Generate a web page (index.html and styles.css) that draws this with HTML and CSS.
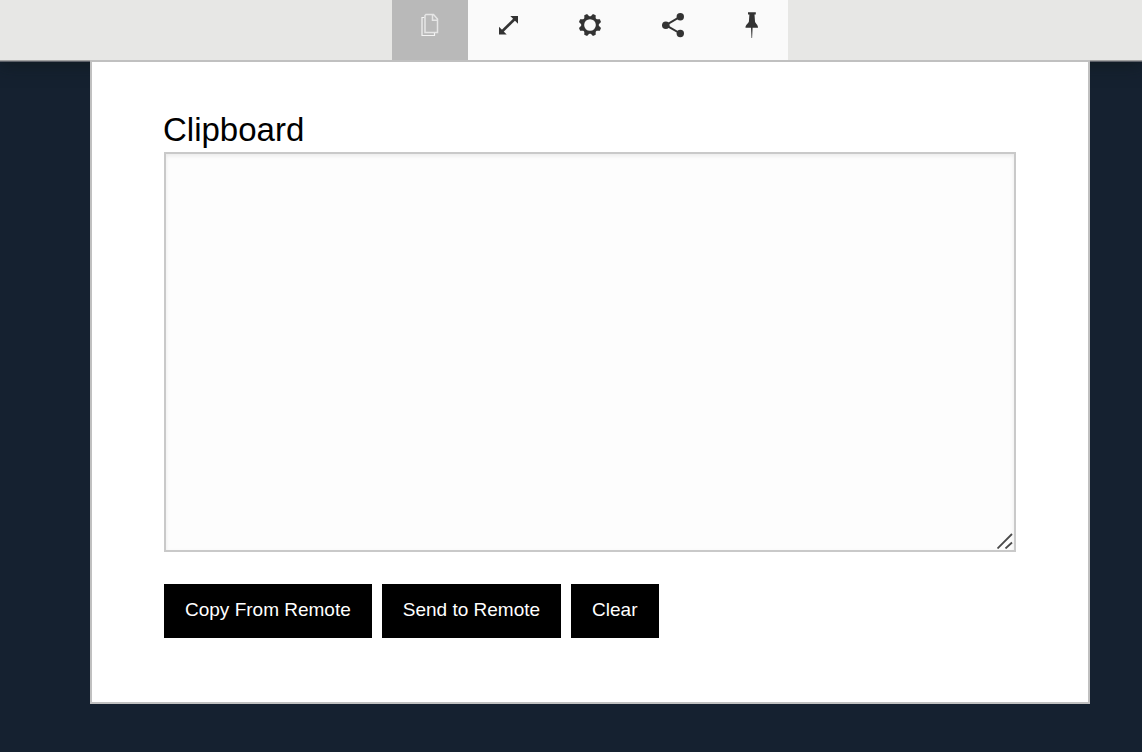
FILE: index.html
```html
<!DOCTYPE html>
<html lang="en">
<head>
<meta charset="utf-8">
<meta name="viewport" content="width=device-width, initial-scale=1">
<title>Clipboard</title>
<link rel="stylesheet" href="styles.css">
</head>
<body>
<header class="topbar">
  <nav class="tools" aria-label="Session tools">
    <button class="tool tool-active" type="button" aria-label="Clipboard">
      <svg class="icon" width="16" height="28" viewBox="422 11 16 28" fill="none" stroke="#f4f4f4" stroke-width="1.2">
        <path d="M424.500 17.500H422V35.500H434.500V33"/>
        <path stroke="#e6e6e6" stroke-width="1.500" d="M426 14.500H433.500L437.500 19V32.500H425V15.500Z M432.500 14.500V20.200H437.500"/>
      </svg>
    </button>
    <button class="tool" type="button" aria-label="Full screen">
      <svg class="icon" width="20" height="28" viewBox="498 11 20 28" fill="#333">
        <path d="M510.300 16H518V23.700Z M499 26.800V34.500H506.700Z"/>
        <path d="M502 31.500L515 18.800" stroke="#333" stroke-width="2.600"/>
      </svg>
    </button>
    <button class="tool" type="button" aria-label="Settings">
      <svg class="icon" width="24" height="28" viewBox="-12 -14 24 28" fill="#333">
        <circle r="7.300" fill="none" stroke="#333" stroke-width="2.900"/>
        <g id="teeth">
          <path id="tooth" d="M-3 -7.500L-1.500 -11.300H1.500L3 -7.500Z" transform="rotate(22.500)"/>
          <use href="#tooth" transform="rotate(45)"/>
          <use href="#tooth" transform="rotate(90)"/>
          <use href="#tooth" transform="rotate(135)"/>
        </g>
        <use href="#teeth" transform="rotate(180)"/>
      </svg>
    </button>
    <button class="tool" type="button" aria-label="Share">
      <svg class="icon" width="22" height="28" viewBox="662 11 22 28" fill="#333">
        <path d="M680.300 16.700L665.800 25.200L680.300 33.500" fill="none" stroke="#333" stroke-width="2"/>
        <circle cx="665.800" cy="25.200" r="3.800"/>
        <circle cx="680.300" cy="16.700" r="3.700"/>
        <circle cx="680.300" cy="33.500" r="3.700"/>
      </svg>
    </button>
    <button class="tool" type="button" aria-label="Pin toolbar">
      <svg class="icon" width="14" height="28" viewBox="744 11 14 28" fill="#333">
        <path d="M748 12.300H755.800V14.500H754.500L755 21.500C755.300 23.500 758 24.500 758 27.700H752.600L752.100 38H751.500L751 27.700H745.500C745.500 24.500 748.500 23.500 748.900 21.500L749.400 14.500H748Z"/>
      </svg>
    </button>
  </nav>
</header>
<main class="panel">
  <label class="title" for="clip">Clipboard</label>
  <div class="field">
    <textarea class="clip" id="clip"></textarea>
    <svg class="grip" width="16" height="16" viewBox="0 0 16 16" fill="none" stroke="#4a4a4a" stroke-width="1.800" aria-hidden="true">
      <path d="M.5 15.500L15 1M8.500 15.500L15 9.500"/>
    </svg>
  </div>
  <div class="actions">
    <button class="action" type="button">Copy From Remote</button>
    <button class="action" type="button">Send to Remote</button>
    <button class="action" type="button">Clear</button>
  </div>
</main>
</body>
</html>
```

FILE: styles.css
```css
* {
  box-sizing: border-box;
}

body {
  margin: 0;
  background: #152130;
  font-family: "Liberation Sans", Arial, sans-serif;
  color: #000;
}

.topbar {
  display: flex;
  justify-content: center;
  padding-left: 38px;
  background: #e7e7e5;
  box-shadow: 0 1px 0 #a0a0a0, 0 2px 0 #5c6068, 0 4px 16px rgba(14, 24, 28, .8);
}

.tools {
  display: flex;
  background: #fafafa;
}

.tool {
  display: flex;
  padding: 11px 30px 21px;
  border: 0;
  background: none;
}

.tool-active {
  background: #b9b9b9;
}

.icon {
  display: block;
  overflow: visible;
}

.panel {
  position: relative;
  margin: 0 52px 48px 90px;
  padding: 48px 72px 64px;
  border: 2px solid #c0c0c0;
  background: #fff;
}

.title {
  display: block;
  margin: 0 0 2px -1px;
  font-size: 33px;
  line-height: 40px;
}

.field {
  position: relative;
}

.clip {
  display: block;
  width: 100%;
  height: 400px;
  padding: 12px;
  border: 2px solid #c9c9c9;
  border-radius: 0;
  background: #fdfdfd;
  box-shadow: inset 0 2px 4px rgba(0, 0, 0, .08);
  font: inherit;
  font-size: 19px;
  resize: none;
  outline: 0;
}

.grip {
  position: absolute;
  right: 3px;
  bottom: 3px;
  pointer-events: none;
}

.actions {
  display: flex;
  flex-wrap: wrap;
  gap: 10px;
  margin-top: 32px;
}

.action {
  padding: 14px 21px 16px;
  border: 0;
  background: #000;
  color: #fff;
  font: inherit;
  font-size: 19px;
  line-height: 24px;
}
```
